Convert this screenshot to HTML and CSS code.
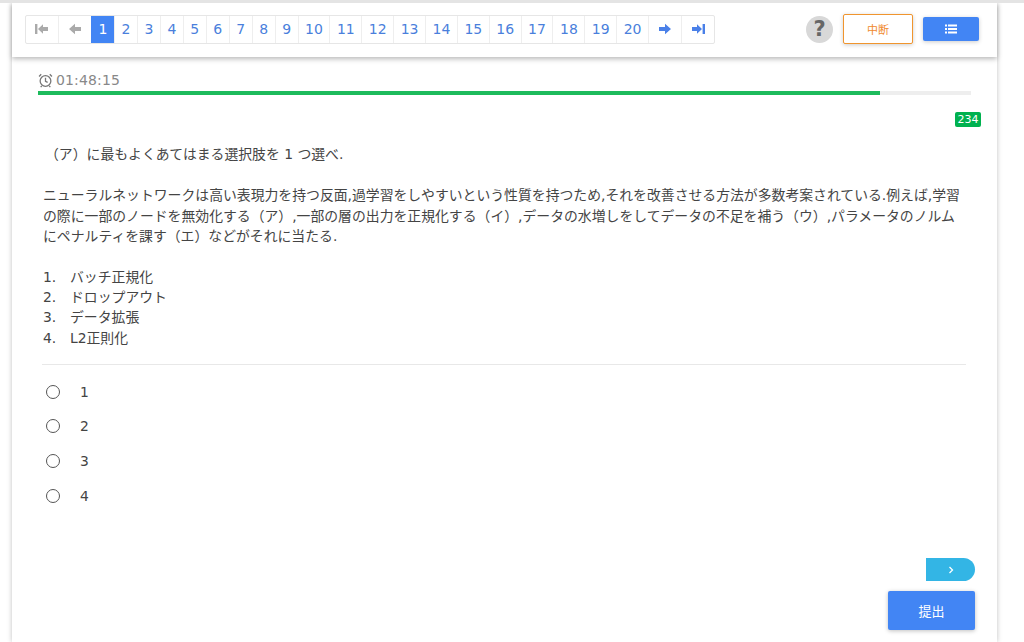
FILE: index.html
```html
<!DOCTYPE html>
<html lang="ja">
<head>
  <meta charset="UTF-8">
  <title>試験</title>
  <link rel="stylesheet" href="styles.css">
</head>
<body>
  <div class="sheet">
    <!-- Header -->
    <div class="topbar">
      <ul class="pager">
        <li class="nav muted"><svg width="14" height="12" viewBox="0 0 14 12"><rect x="0" y="1" width="2.4" height="10"/><path d="M3 6 8 1.2V4h5v4H8v2.800z"/></svg></li>
        <li class="nav muted"><svg width="14" height="12" viewBox="0 0 14 12"><path d="M1 6 7 .8V4h6v4H7v3.200z"/></svg></li>
        <li class="active">1</li>
        <li>2</li>
        <li>3</li>
        <li>4</li>
        <li>5</li>
        <li>6</li>
        <li>7</li>
        <li>8</li>
        <li>9</li>
        <li>10</li>
        <li>11</li>
        <li>12</li>
        <li>13</li>
        <li>14</li>
        <li>15</li>
        <li>16</li>
        <li>17</li>
        <li>18</li>
        <li>19</li>
        <li>20</li>
        <li class="nav"><svg width="14" height="12" viewBox="0 0 14 12"><path d="M13 6 7 .8V4H1v4h6v3.200z"/></svg></li>
        <li class="nav"><svg width="14" height="12" viewBox="0 0 14 12"><rect x="11.600" y="1" width="2.400" height="10"/><path d="M11 6 6 1.200V4H1v4h5v2.800z"/></svg></li>
      </ul>
      <div class="actions">
        <div class="help">?</div>
        <button class="btn-pause">中断</button>
        <button class="btn-list">
          <svg width="12" height="10" viewBox="0 0 12 10"><g fill="#fff"><rect x="0" y="0.500" width="2" height="2"/><rect x="3" y="0.500" width="9" height="2"/><rect x="0" y="4" width="2" height="2"/><rect x="3" y="4" width="9" height="2"/><rect x="0" y="7.500" width="2" height="2"/><rect x="3" y="7.500" width="9" height="2"/></g></svg>
        </button>
      </div>
    </div>

    <!-- Timer -->
    <div class="timer">
      <div class="clock">
        <svg width="15" height="15" viewBox="0 0 14 14" fill="none" stroke="#777" stroke-width="1.200"><circle cx="7" cy="7.500" r="5"/><path d="M7 4.500v3.200l2 1M1 3.200 3 1.200M13 3.200l-2-2M3.500 12 2.500 13.200M10.500 12l1 1.200"/></svg>
        <span>01:48:15</span>
      </div>
      <div class="progress"><div class="progress-fill" style="width: 90.300%"></div></div>
    </div>
    <div class="badge-row"><span class="badge">234</span></div>

    <!-- Question -->
    <div class="question">
      <p class="lead">（ア）に最もよくあてはまる選択肢を 1 つ選べ.</p>
      <p class="body-text">ニューラルネットワークは高い表現力を持つ反面,過学習をしやすいという性質を持つため,それを改善させる方法が多数考案されている.例えば,学習の際に一部のノードを無効化する（ア）,一部の層の出力を正規化する（イ）,データの水増しをしてデータの不足を補う（ウ）,パラメータのノルムにペナルティを課す（エ）などがそれに当たる.</p>
      <ol class="choices">
        <li><span class="num">1.</span>バッチ正規化</li>
        <li><span class="num">2.</span>ドロップアウト</li>
        <li><span class="num">3.</span>データ拡張</li>
        <li><span class="num">4.</span>L2正則化</li>
      </ol>
    </div>
    <hr class="rule">

    <div class="answers">
      <label class="answer"><span class="radio"></span>1</label>
      <label class="answer"><span class="radio"></span>2</label>
      <label class="answer"><span class="radio"></span>3</label>
      <label class="answer"><span class="radio"></span>4</label>
    </div>

    <!-- Footer buttons -->
    <div class="bottom">
      <div class="next-tab"><svg width="6" height="8" viewBox="0 0 6 8" fill="none" stroke="#fff" stroke-width="1.300"><path d="M1.500 1 4.500 4 1.500 7"/></svg></div>
      <button class="btn-submit">提出</button>
    </div>
  </div>
</body>
</html>
```

FILE: styles.css
```css
html, body { margin: 0; height: 100%; overflow: hidden; }
body { font-family: "DejaVu Sans", "Noto Sans CJK JP", sans-serif; font-size: 13.850px; color: #444; background-color: #fff; border-top: 3px solid #e4e4e4; box-sizing: border-box; }
button { font-family: inherit; cursor: pointer; }

.sheet { width: 985px; height: 639px; margin-left: 12px; background-color: #fff; box-shadow: 0 0 5px rgba(0,0,0,0.25); position: relative; }

/* Header */
.topbar { height: 54px; display: flex; justify-content: space-between; align-items: center; padding: 0 18px 0 13px; background-color: #fff; box-shadow: 0 2px 5px rgba(0,0,0,0.28); }
.pager { list-style: none; margin: 0 0 2px; padding: 0; display: flex; height: 27px; border: 1px solid #e6e6e6; border-radius: 2px; }
.pager li { padding: 0 6.525px; display: flex; align-items: center; justify-content: center; font-size: 14px; color: #4a7fdc; border-left: 1px solid #eee; }
.pager li:first-child { border-left: none; width: 32px; }
.pager .nav { width: 33px; padding: 0; box-sizing: border-box; fill: #4a80e8; }
.pager .muted { fill: #aaa; }
.pager .active { background-color: #4285f4; color: #fff; border-left-color: #4285f4; }

.actions { display: flex; align-items: center; margin-bottom: 2px; }
.help { width: 27px; height: 27px; border-radius: 50%; background-color: #d8d8d8; color: #666; font-size: 21px; font-weight: bold; text-align: center; line-height: 27px; margin-right: 10px; }
.btn-pause { width: 70px; height: 30px; margin-right: 10px; padding: 0; background-color: #fff; border: 1.500px solid #f0952e; border-radius: 2px; color: #f0892e; font-size: 11px; box-shadow: 0 1px 4px rgba(0,0,0,0.2); }
.btn-list { width: 56px; height: 24px; padding: 0; background-color: #4285f4; border: none; border-radius: 2px; display: flex; align-items: center; justify-content: center; box-shadow: 0 1px 4px rgba(0,0,0,0.2); }

/* Timer */
.timer { padding: 14px 26px 0; }
.clock { display: flex; align-items: center; height: 18px; color: #888; font-size: 14px; gap: 3px; letter-spacing: 0.150px; }
.progress { height: 4px; margin-top: 2px; background-color: #eee; }
.progress-fill { height: 100%; background-color: #1dbb5c; }
.badge-row { display: flex; justify-content: flex-end; padding: 17px 16px 0 0; }
.badge { width: 26px; height: 15px; line-height: 15px; text-align: center; background-color: #00b14f; color: #fff; font-size: 11px; border-radius: 2px; }

/* Question */
.question { padding: 0 33px 0 31px; line-height: 20.400px; }
.question p { margin: 0; }
.lead { padding-top: 17px; padding-left: 2px; margin-bottom: 21px !important; }
.body-text { margin-bottom: 20px !important; }
.choices { list-style: none; margin: 0; padding: 0; }
.choices li { display: flex; }
.num { width: 27px; }
.rule { margin: 16px 31px 0 30px; border: none; border-top: 1px solid #e8e8e8; }

.answers { padding: 9px 0 0 34px; }
.answer { display: flex; align-items: center; height: 34.700px; }
.radio { width: 12px; height: 12px; border: 1.200px solid #555; border-radius: 50%; margin-right: 20px; }

/* Footer buttons */
.bottom { position: absolute; right: 22px; bottom: 12px; display: flex; flex-direction: column; align-items: flex-end; }
.next-tab { width: 49px; height: 23px; background-color: #33b5e5; border-radius: 0 12px 12px 0; display: flex; align-items: center; justify-content: center; margin-bottom: 10px; }
.btn-submit { width: 87px; height: 39px; background-color: #4285f4; border: none; border-radius: 2px; color: #fff; font-size: 13px; box-shadow: 0 1px 4px rgba(0,0,0,0.25); }
```
